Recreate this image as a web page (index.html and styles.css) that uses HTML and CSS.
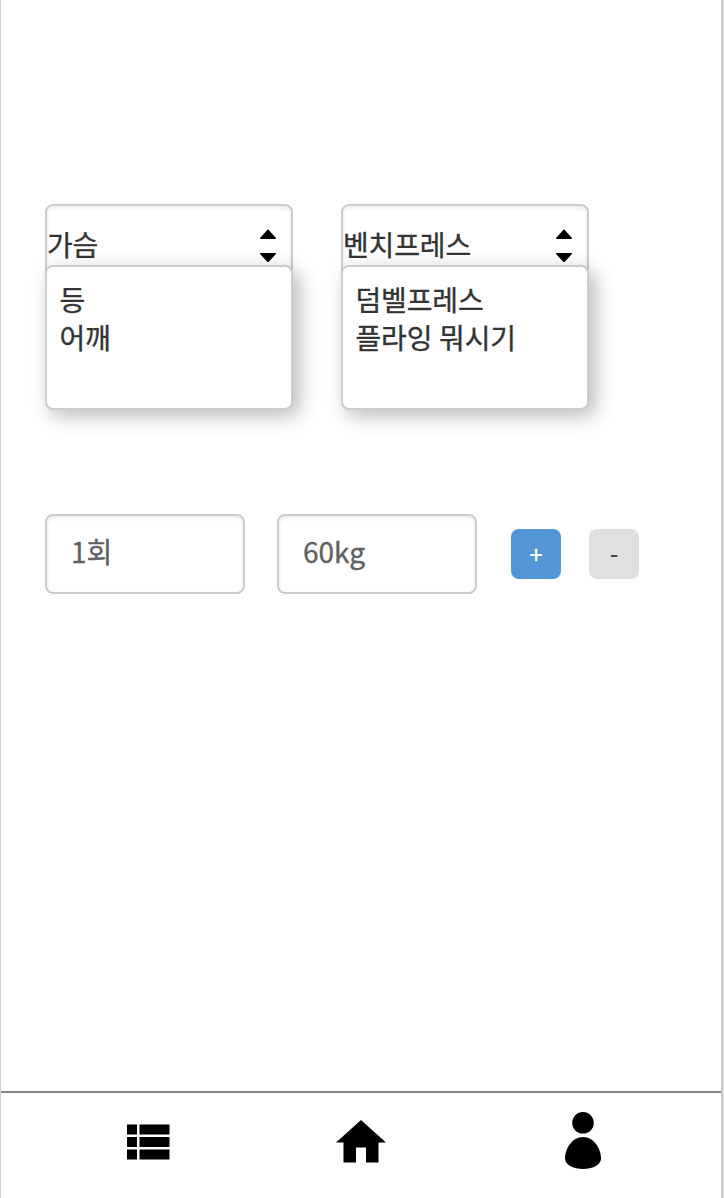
FILE: index.html
```html
<!DOCTYPE html>
<html lang="ko">
<head>
<meta charset="utf-8">
<title>운동 기록</title>
<link rel="stylesheet" href="styles.css">
</head>
<body>
<div class="app">
  <main class="content">
    <div class="selects">
      <div class="select">
        <span class="select-value">가슴</span>
        <svg class="arrows" width="16" height="34" viewBox="0 0 16 34"><path d="M.5 9.9Q-.4 9.6.3 8.8L7 1.2Q8 0 9 1.2L15.7 8.8Q16.4 9.6 15.5 9.9ZM.5 24.1Q-.4 24.4.3 25.2L7 32.6Q8 33.8 9 32.6L15.7 25.2Q16.4 24.4 15.5 24.1Z"/></svg>
        <ul class="options"><li>등</li><li>어깨</li></ul>
      </div>
      <div class="select">
        <span class="select-value">벤치프레스</span>
        <svg class="arrows" width="16" height="34" viewBox="0 0 16 34"><path d="M.5 9.9Q-.4 9.6.3 8.8L7 1.2Q8 0 9 1.2L15.7 8.8Q16.4 9.6 15.5 9.9ZM.5 24.1Q-.4 24.4.3 25.2L7 32.6Q8 33.8 9 32.6L15.7 25.2Q16.4 24.4 15.5 24.1Z"/></svg>
        <ul class="options"><li>덤벨프레스</li><li>플라잉 뭐시기</li></ul>
      </div>
    </div>
    <div class="entry">
      <div class="field">1회</div>
      <div class="field">60kg</div>
      <div class="buttons">
        <button class="btn btn-add">+</button>
        <button class="btn btn-remove">-</button>
      </div>
    </div>
  </main>
  <nav class="tabs">
    <svg class="icon-list" width="43" height="36" viewBox="0 0 43 36"><path d="M0 .5h10v10H0zM12.5.5h30v10h-30zM0 13h10v10H0zM12.5 13h30v10h-30zM0 25.5h10v10H0zM12.5 25.5h30v10h-30z"/></svg>
    <svg class="icon-home" width="50" height="43" viewBox="0 0 50 43"><path d="M25 0 50 22.5H42.5V42.5H30V27.5H20V42.5H7.5V22.5H0Z"/></svg>
    <svg class="icon-user" width="36" height="58" viewBox="0 0 36 58"><circle cx="18" cy="10.8" r="10.8"/><path d="M18 25C29 25 36 37 36 46.5C36 53 27 57 18 57S0 53 0 46.5C0 37 7 25 18 25Z"/></svg>
  </nav>
</div>
</body>
</html>
```
FILE: styles.css
```css
* { box-sizing: border-box; }
body {
  margin: 0;
  background: #e2e2e2;
  font-family: "Noto Sans CJK KR", sans-serif;
  color: #333;
}
.app {
  display: flex;
  flex-direction: column;
  width: 723px;
  height: 1198px;
  border-left: 1px solid #d0d0d0;
  border-right: 2px solid #ccc;
  background: #fff;
}
.content { flex: 1; padding: 204px 0 0 44px; }
.selects { display: flex; gap: 48px; }
.select {
  position: relative;
  width: 248px;
  height: 80px;
  border: 2px solid #ccc;
  border-radius: 8px;
  box-shadow: inset 0 2px 4px rgba(0, 0, 0, .08);
  display: flex;
  justify-content: space-between;
  font-size: 28px;
  line-height: 38px;
  letter-spacing: -.15px;
  -webkit-text-stroke: .35px currentColor;
}
.select-value { padding-top: 19px; }
.arrows { margin: 23px 15px 0 0; }
.options {
  position: absolute;
  top: 59px;
  left: -2px;
  width: 248px;
  height: 145px;
  margin: 0;
  padding: 13px 12.5px;
  list-style: none;
  background: #fff;
  border: 2px solid #ccc;
  border-radius: 8px;
  box-shadow: 6px 6px 20px rgba(0, 0, 0, .28);
  word-spacing: -1px;
}
.entry { display: flex; align-items: center; gap: 32px; margin-top: 230px; }
.field {
  width: 200px;
  height: 80px;
  padding: 16px 24px;
  border: 2px solid #ccc;
  border-radius: 8px;
  box-shadow: inset 0 2px 4px rgba(0, 0, 0, .08);
  color: #606060;
  font-size: 28px;
  line-height: 38px;
  -webkit-text-stroke: .35px currentColor;
}
.buttons { display: flex; gap: 28px; padding-left: 2px; }
.btn {
  width: 50px;
  height: 50px;
  padding: 0;
  border: 0;
  border-radius: 8px;
  font: 500 24px/50px "Noto Sans CJK KR", sans-serif;
}
.btn-add { background: #5296d5; color: #fff; padding-bottom: 1px; line-height: 48px; }
.btn-remove { background: #e0e0e0; color: #444; padding-top: 2px; line-height: 48px; }
.tabs {
  display: flex;
  align-items: flex-start;
  height: 107px;
  border-top: 2px solid #858585;
}
.icon-list { margin: 31px 0 0 126px; }
.icon-home { margin: 26.5px 0 0 166px; }
.icon-user { margin: 19px 0 0 179px; }
```
